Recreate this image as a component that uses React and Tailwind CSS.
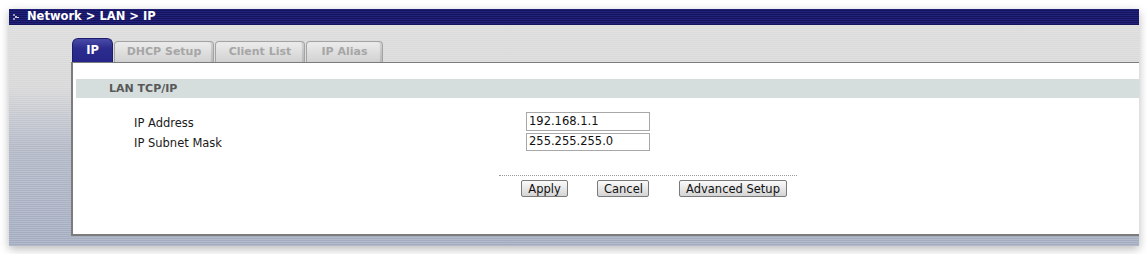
const font = "font-['DejaVu_Sans','Verdana',sans-serif]";

function Tab({ label, active, width }) {
  if (active) {
    return (
      <div
        className={`flex h-[24px] items-center justify-center rounded-t-[6px] border border-b-0 border-[#1c1c6a] bg-[linear-gradient(#4a4aa8,#2c2c8e_40%,#26268a)] pt-[1px] text-[11.5px] font-bold text-white ${width}`}
      >
        {label}
      </div>
    );
  }
  return (
    <div
      className={`flex h-[21px] items-center justify-center rounded-t-[4px] border border-b-0 border-[#a4a4a4] bg-[linear-gradient(#ececec,#dcdcdc_60%,#d2d2d2)] text-[11px] font-bold text-[#a6a6a6] shadow-[inset_-2px_0_1px_rgba(0,0,0,0.12)] ${width}`}
    >
      {label}
    </div>
  );
}

function Btn({ children, className = "" }) {
  return (
    <button
      className={`h-[17px] rounded-[2px] border border-[#7a7a7a] bg-[linear-gradient(#fafafa,#e6e6e6_55%,#d4d4d4)] px-[6px] text-[11.5px] leading-[14px] text-[#111] ${className}`}
    >
      {children}
    </button>
  );
}

export default function App() {
  return (
    <div className={`h-[254px] w-[1147px] bg-white pl-[9px] pr-[8px] pt-[9px] ${font}`}>
      <div className="flex h-[237px] flex-col shadow-[0_3px_9px_rgba(0,0,0,0.28)]">
        {/* Title bar */}
        <div className="flex h-[16px] items-center gap-[6px] bg-[repeating-linear-gradient(0deg,#14145e_0px,#14145e_1px,#22227a_1px,#22227a_2px)] pl-[3px]">
          <svg width="8" height="9" viewBox="0 0 8 9" className="ml-[1px]">
            <rect x="0" y="1" width="2" height="2" fill="#9a9ab8" />
            <rect x="2" y="3" width="2" height="2" fill="#c0c0d8" />
            <rect x="0" y="5" width="2" height="2" fill="#9a9ab8" />
            <rect x="4" y="4" width="2" height="1" fill="#d8d8e8" />
          </svg>
          <span className="text-[11.5px] font-bold leading-none text-white">Network &gt; LAN &gt; IP</span>
        </div>

        {/* Body */}
        <div className="flex flex-1 flex-col bg-[repeating-linear-gradient(0deg,rgba(255,255,255,0.18)_0px,rgba(255,255,255,0.18)_1px,transparent_1px,transparent_2px),linear-gradient(#dcdcdc_0%,#d7d7d8_28%,#b2b8c6_55%,#a2abbf_100%)] pb-[10px] pl-[62px] pt-[13px]">
          {/* Tabs */}
          <div className="flex h-[24px] items-end gap-[1px] pl-[1px]">
            <Tab label="IP" active width="w-[41px]" />
            <Tab label="DHCP Setup" width="w-[100px]" />
            <Tab label="Client List" width="w-[90px]" />
            <Tab label="IP Alias" width="w-[77px]" />
          </div>

          {/* Content */}
          <div className="flex-1 border-b-2 border-l-2 border-t border-[#7c7c7c] bg-white pl-[3px] pt-[16px]">
            <div className="flex h-[19px] items-center bg-[#d5dedd] pl-[33px] pt-[1px] text-[11px] font-bold text-[#585858]">
              LAN TCP/IP
            </div>

            <div className="mt-[14px] flex flex-col gap-[2px] pl-[58px]">
              <div className="flex items-center">
                <span className="w-[392px] pt-[2px] text-[11.5px] leading-[14px] text-[#1a1a1a]">IP Address</span>
                <div className="flex h-[19px] w-[124px] items-center border border-[#a8a8a8] pl-[2px] text-[11.5px] text-[#111]">
                  192.168.1.1
                </div>
              </div>
              <div className="flex items-center">
                <span className="w-[392px] pt-[2px] text-[11.5px] leading-[14px] text-[#1a1a1a]">IP Subnet Mask</span>
                <div className="flex h-[18px] w-[124px] items-center border border-[#a8a8a8] pl-[2px] text-[11.5px] text-[#111]">
                  255.255.255.0
                </div>
              </div>
            </div>

            <div className="ml-[423px] mt-[24px] w-[298px] border-t border-dotted border-[#9a9a9a]" />

            <div className="ml-[445px] mt-[4px] flex items-center">
              <Btn className="w-[47px]">Apply</Btn>
              <Btn className="ml-[29px] w-[52px]">Cancel</Btn>
              <Btn className="ml-[30px] w-[108px]">Advanced Setup</Btn>
            </div>
          </div>
        </div>
      </div>
    </div>
  );
}
